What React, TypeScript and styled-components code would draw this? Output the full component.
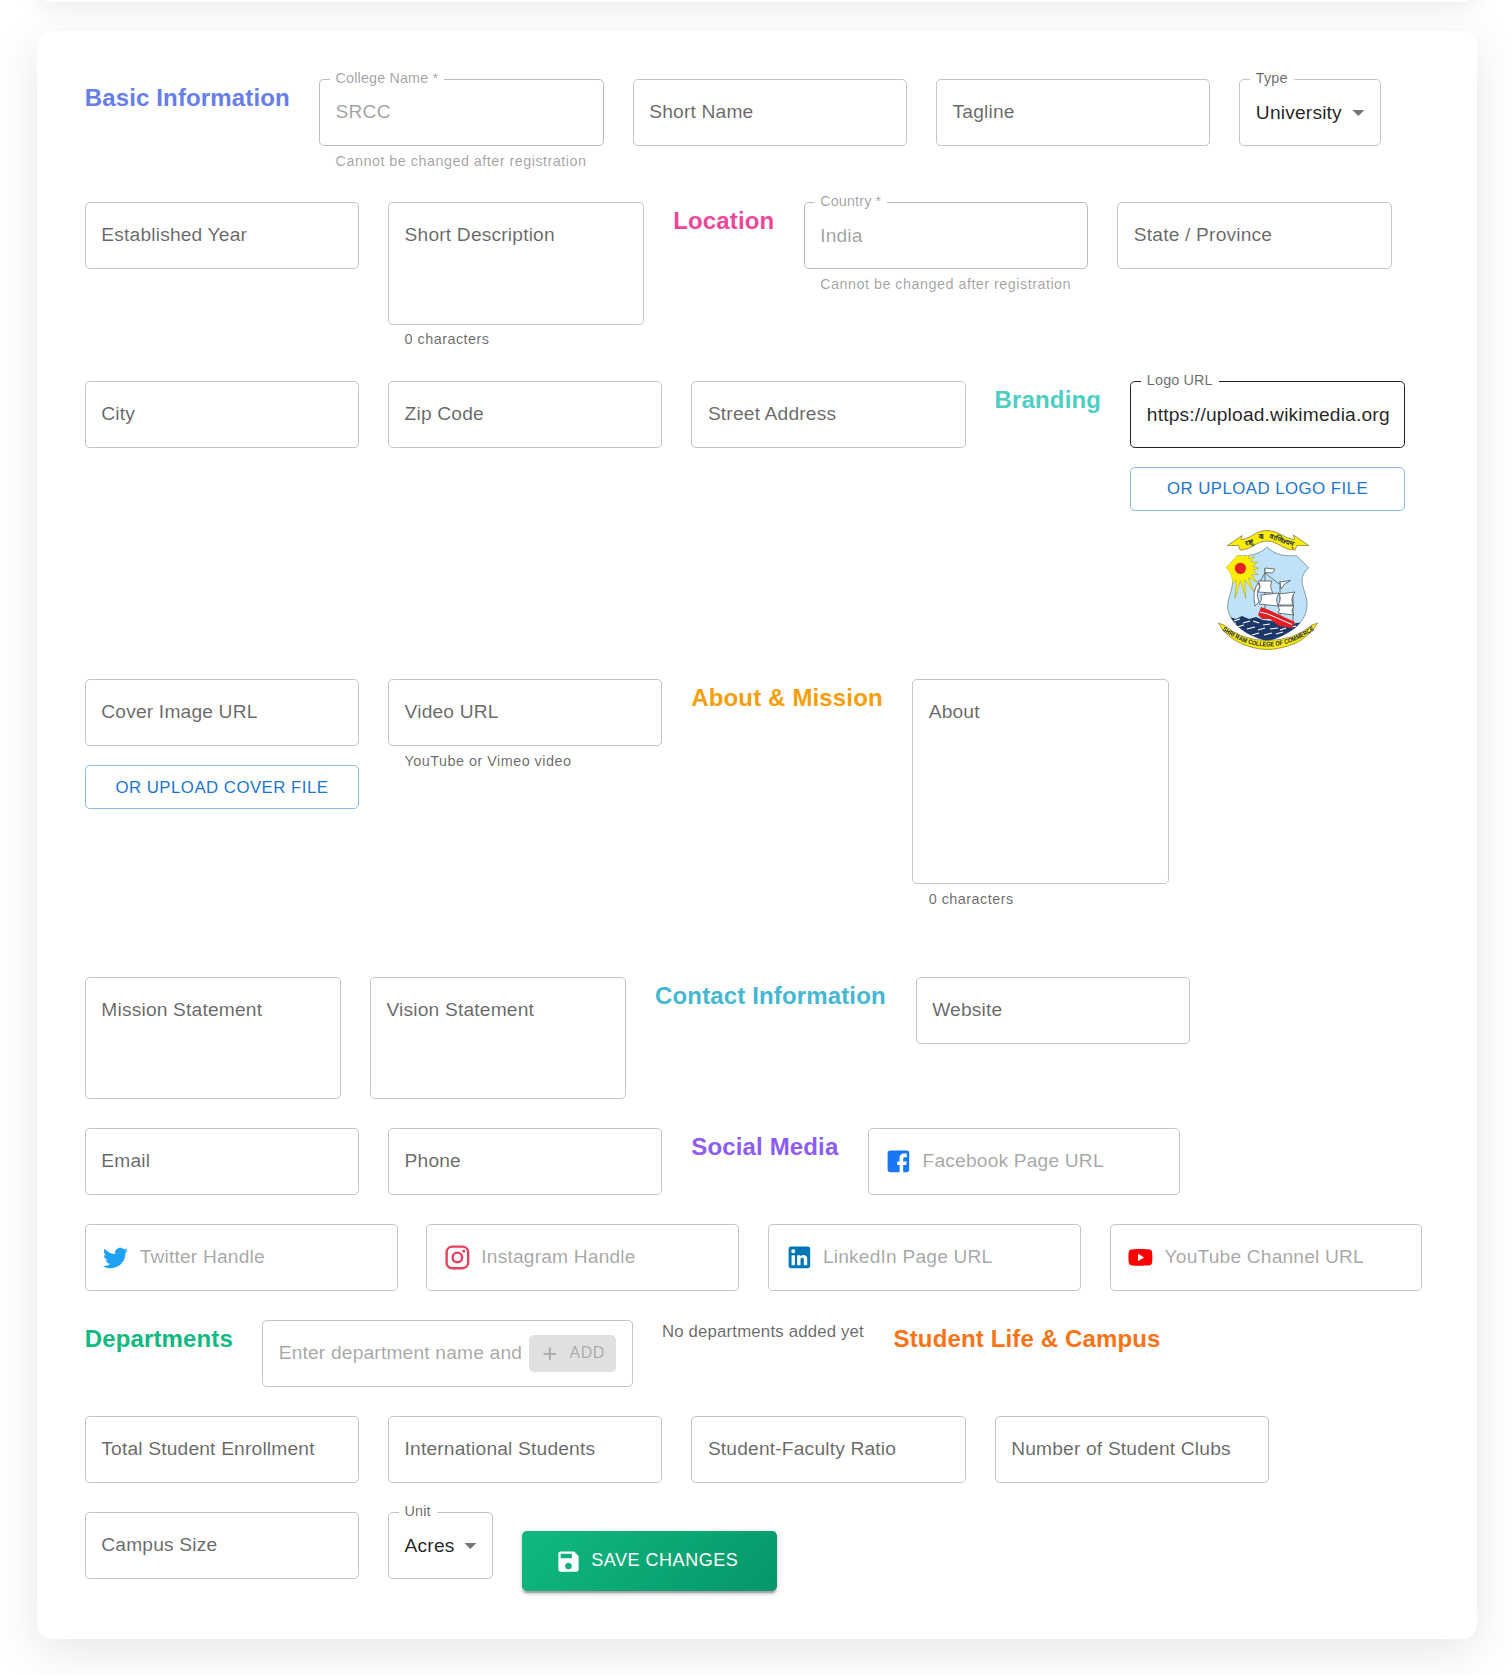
import React from 'react';
import styled, { createGlobalStyle } from 'styled-components';

const GlobalStyle = createGlobalStyle`
  *, *::before, *::after { box-sizing: border-box; }
  body {
    margin: 0;
    background: #fff;
    color: rgba(0, 0, 0, 0.87);
    font-family: "Liberation Sans", Arial, sans-serif;
  }
  input, button { font-family: inherit; }
`;

const Page = styled.main`
  height: 1675px;
  overflow: hidden;
  padding-left: 36.7px;
`;

const PreviousCard = styled.div`
  width: 1440px;
  height: 200px;
  margin-top: -198px;
  background: #fff;
  border-radius: 14.4px;
  box-shadow: 0 4.8px 24px rgba(0, 0, 0, 0.08);
`;

const Card = styled.section`
  width: 1440px;
  margin-top: 28.6px;
  padding: 48px;
  background: #fff;
  border-radius: 14.4px;
  box-shadow: 0 12px 48px rgba(0, 0, 0, 0.1);
  display: flex;
  flex-direction: column;
  gap: 28.8px;
`;

const Row = styled.div<{ $minHeight?: number }>`
  display: flex;
  align-items: flex-start;
  gap: 28.8px;
  min-height: ${(p) => (p.$minHeight ? `${p.$minHeight}px` : '0')};
`;

const Heading = styled.h6<{ $color: string; $width: number }>`
  flex: none;
  width: ${(p) => p.$width}px;
  margin: -0.05px 0 0;
  color: ${(p) => p.$color};
  font-size: 24px;
  font-weight: 600;
  line-height: 38.4px;
  letter-spacing: 0.006em;
  white-space: nowrap;
`;

const Control = styled.div<{ $width: number }>`
  flex: none;
  width: ${(p) => p.$width}px;
  display: flex;
  flex-direction: column;
`;

type Tone = 'normal' | 'disabled' | 'active';
const borderOf: Record<Tone, string> = {
  normal: 'rgba(0, 0, 0, 0.23)',
  disabled: 'rgba(0, 0, 0, 0.26)',
  active: 'rgba(0, 0, 0, 0.87)',
};

const Outline = styled.div<{ $tone: Tone; $height: number }>`
  position: relative;
  display: flex;
  align-items: flex-start;
  height: ${(p) => p.$height}px;
  padding: 18px 15.6px 0;
  border: 1px solid ${(p) => borderOf[p.$tone]};
  border-radius: 4.8px;
`;

const RestingLabel = styled.label`
  color: rgba(0, 0, 0, 0.6);
  font-size: 19.2px;
  line-height: 27.6px;
  letter-spacing: 0.00938em;
  white-space: nowrap;
`;

const FloatingLabel = styled.label<{ $disabled: boolean }>`
  position: absolute;
  top: -10.9px;
  left: 9.6px;
  padding: 0 6px;
  background: #fff;
  color: ${(p) => (p.$disabled ? 'rgba(0, 0, 0, 0.38)' : 'rgba(0, 0, 0, 0.6)')};
  font-size: 14.4px;
  line-height: 18px;
  letter-spacing: 0.00938em;
  white-space: nowrap;
`;

const Value = styled.div<{ $disabled?: boolean; $select?: boolean }>`
  flex: 1;
  min-width: 0;
  margin-top: ${(p) => (p.$select ? 0.95 : 0.8)}px;
  color: ${(p) => (p.$disabled ? 'rgba(0, 0, 0, 0.38)' : 'rgba(0, 0, 0, 0.87)')};
  font-size: 19.2px;
  line-height: 27.6px;
  letter-spacing: 0.00938em;
  white-space: nowrap;
`;

const Placeholder = styled.div`
  flex: 1;
  min-width: 0;
  color: rgba(0, 0, 0, 0.365);
  font-size: 19.2px;
  line-height: 27.6px;
  letter-spacing: 0.00938em;
  white-space: nowrap;
`;

const HelperText = styled.p<{ $disabled?: boolean }>`
  margin: 3.75px 16.6px -0.15px;
  color: ${(p) => (p.$disabled ? 'rgba(0, 0, 0, 0.38)' : 'rgba(0, 0, 0, 0.6)')};
  font-size: 14.4px;
  line-height: 23.9px;
  letter-spacing: 0.03333em;
  white-space: nowrap;
`;

const Arrow = styled.svg`
  flex: none;
  width: 28.8px;
  height: 28.8px;
  margin: 0.3px -8px 0 0;
  fill: rgba(0, 0, 0, 0.54);
`;

const BrandIcon = styled.svg<{ $color: string }>`
  flex: none;
  width: 28.8px;
  height: 28.8px;
  margin: 0 9.6px 0 0;
  fill: ${(p) => p.$color};
`;

const UploadButton = styled.button`
  height: 43.8px;
  margin-top: 19.2px;
  padding: 0;
  background: transparent;
  border: 1px solid rgba(25, 118, 210, 0.5);
  border-radius: 4.8px;
  color: #1976d2;
  font-size: 16.8px;
  font-weight: 500;
  line-height: 29.4px;
  letter-spacing: 0.02857em;
`;

const CrestFrame = styled.div`
  display: flex;
  justify-content: center;
  margin-top: 19.2px;
  padding-left: 1.6px;
`;

const AddButton = styled.button`
  flex: none;
  display: flex;
  align-items: center;
  gap: 9px;
  height: 36.9px;
  margin: -3.8px 0 0 8px;
  padding: 0 11.8px 0 9.6px;
  background: rgba(0, 0, 0, 0.12);
  border: 0;
  border-radius: 4.8px;
  color: rgba(0, 0, 0, 0.26);
  font-size: 16px;
  font-weight: 500;
  letter-spacing: 0.02857em;
`;

const AddIcon = styled.svg`
  width: 21.6px;
  height: 21.6px;
  fill: currentColor;
`;

const EmptyNote = styled.p`
  flex: none;
  width: 202.9px;
  margin: 0;
  color: rgba(0, 0, 0, 0.6);
  font-size: 16.8px;
  line-height: 24px;
  letter-spacing: 0.01071em;
  white-space: nowrap;
`;

const SaveButton = styled.button`
  display: flex;
  align-items: center;
  justify-content: center;
  gap: 9.6px;
  width: 255px;
  height: 60px;
  margin-top: 19.2px;
  padding: 0 5.6px 0 0;
  border: 0;
  border-radius: 4.8px;
  background: linear-gradient(135deg, #10b981 0%, #059669 100%);
  box-shadow: 0 3.6px 1.2px -2.4px rgba(0, 0, 0, 0.2), 0 2.4px 2.4px rgba(0, 0, 0, 0.14),
    0 1.2px 6px rgba(0, 0, 0, 0.12);
  color: #fff;
  font-size: 18px;
  font-weight: 500;
  letter-spacing: 0.02857em;
`;

const SaveIcon = styled.svg`
  width: 27px;
  height: 27px;
  fill: currentColor;
  margin-top: 1px;
`;

interface FieldProps {
  label: string;
  value?: string;
  width?: number;
  height?: number;
  helper?: string;
  tone?: Tone;
  select?: boolean;
  children?: React.ReactNode;
}

function Field({ label, value, width = 274.5, height = 67.2, helper, tone = 'normal', select, children }: FieldProps) {
  const disabled = tone === 'disabled';
  return (
    <Control $width={width}>
      <Outline $tone={tone} $height={height}>
        {value ? (
          <>
            <FloatingLabel $disabled={disabled}>{label}</FloatingLabel>
            <Value $disabled={disabled} $select={select}>{value}</Value>
          </>
        ) : (
          <RestingLabel>{label}</RestingLabel>
        )}
        {select && (
          <Arrow viewBox="0 0 24 24">
            <path d="M7 10l5 5 5-5z" />
          </Arrow>
        )}
      </Outline>
      {helper && <HelperText $disabled={disabled}>{helper}</HelperText>}
      {children}
    </Control>
  );
}

const brandPaths = {
  facebook:
    'M5 3h14a2 2 0 0 1 2 2v14a2 2 0 0 1-2 2h-3v-6h2.4l.6-3h-3v-2c0-1 .5-1.5 1.5-1.5H19V5.5h-2.5c-2.2 0-3.5 1.4-3.500 3.500v3h-2v3h2v6H5a2 2 0 0 1-2-2V5c0-1.110.9-2 2-2z',
  twitter:
    'M22.46 6c-.77.35-1.6.58-2.46.69.88-.53 1.56-1.37 1.88-2.38-.83.5-1.75.85-2.72 1.05C18.37 4.5 17.26 4 16 4c-2.35 0-4.27 1.92-4.27 4.29 0 .34.04.67.11.98C8.28 9.09 5.11 7.38 3 4.79c-.37.63-.58 1.37-.58 2.15 0 1.490.75 2.810 1.910 3.560-.71 0-1.370-.2-1.950-.5v.03c0 2.080 1.480 3.820 3.440 4.210a4.220 4.220 0 0 1-1.930.07 4.280 4.280 0 0 0 4 2.980 8.521 8.521 0 0 1-5.330 1.840c-.34 0-.68-.02-1.020-.06C3.440 20.290 5.700 21 8.120 21 16 21 20.330 14.460 20.330 8.790c0-.19 0-.37-.01-.56.84-.6 1.560-1.360 2.140-2.230z',
  instagram:
    'M7.8 2h8.4C19.4 2 22 4.6 22 7.8v8.4a5.800 5.800 0 0 1-5.800 5.800H7.800C4.600 22 2 19.400 2 16.200V7.800A5.800 5.800 0 0 1 7.800 2m-.2 2A3.600 3.600 0 0 0 4 7.600v8.800C4 18.390 5.610 20 7.600 20h8.800a3.600 3.600 0 0 0 3.600-3.600V7.600C20 5.610 18.390 4 16.400 4H7.600m9.650 1.500a1.250 1.250 0 0 1 1.250 1.250A1.250 1.250 0 0 1 17.250 8 1.250 1.250 0 0 1 16 6.750a1.250 1.250 0 0 1 1.250-1.250M12 7a5 5 0 0 1 5 5 5 5 0 0 1-5 5 5 5 0 0 1-5-5 5 5 0 0 1 5-5m0 2a3 3 0 0 0-3 3 3 3 0 0 0 3 3 3 3 0 0 0 3-3 3 3 0 0 0-3-3z',
  linkedin:
    'M19 3a2 2 0 0 1 2 2v14a2 2 0 0 1-2 2H5a2 2 0 0 1-2-2V5a2 2 0 0 1 2-2h14m-.5 15.500v-5.300a3.260 3.260 0 0 0-3.260-3.260c-.85 0-1.840.52-2.320 1.300v-1.110h-2.790v8.370h2.790v-4.930c0-.77.62-1.400 1.390-1.400a1.400 1.400 0 0 1 1.400 1.400v4.930h2.790M6.880 8.560a1.680 1.680 0 0 0 1.680-1.680c0-.93-.75-1.690-1.680-1.690a1.690 1.690 0 0 0-1.690 1.690c0 .93.76 1.680 1.690 1.680m1.390 9.940v-8.370H5.500v8.370h2.770z',
  youtube:
    'M10 15l5.190-3L10 9v6m11.560-7.830c.13.47.22 1.100.28 1.900.07.8.1 1.490.1 2.090L22 12c0 2.190-.16 3.800-.44 4.830-.25.9-.83 1.480-1.730 1.730-.47.13-1.330.22-2.650.28-1.300.07-2.490.1-3.590.1L12 19c-4.190 0-6.800-.16-7.830-.44-.9-.25-1.480-.83-1.730-1.730-.13-.47-.22-1.100-.28-1.900-.07-.8-.1-1.490-.1-2.090L2 12c0-2.190.16-3.800.44-4.830.25-.9.83-1.480 1.730-1.730.47-.13 1.330-.22 2.650-.28 1.300-.07 2.490-.1 3.590-.1L12 5c4.190 0 6.800.16 7.830.44.9.25 1.480.83 1.730 1.730z',
};

function SocialField({ brand, color, text }: { brand: keyof typeof brandPaths; color: string; text: string }) {
  return (
    <Control $width={312.85}>
      <Outline $tone="normal" $height={67.2}>
        <BrandIcon $color={color} viewBox="0 0 24 24">
          <path d={brandPaths[brand]} />
        </BrandIcon>
        <Placeholder>{text}</Placeholder>
      </Outline>
    </Control>
  );
}

// Sunburst outline: rays grow longer towards the bottom of the shield.
function sunRays() {
  const points: string[] = [];
  const count = 36;
  for (let i = 0; i < count; i++) {
    const a = (i * 2 * Math.PI) / count;
    const tip = i % 2 ? 12 : 18.5 + Math.pow(Math.max(0, Math.sin(a)), 3) * 13;
    points.push(`${(22.4 + Math.cos(a) * tip).toFixed(1)},${(38.3 + Math.sin(a) * tip).toFixed(1)}`);
  }
  return points.join(' ');
}

const SHIELD =
  'M49.3 17C54 22 62 27 78.4 25.7L90.700 37.700C84 44 83.500 49 84.400 54C86 62 89.500 68 89 76C88 95 68 106 49.300 111C30 106 11 95 9.500 76C10 68 14 61 14.600 53C15 48 13 42 8.400 37.700L19 25.700C35 27 44 22 49.300 17Z';

function CollegeCrest() {
  return (
    <svg width="100" height="120" viewBox="0 0 100 120" fontFamily="Liberation Sans, Arial, sans-serif">
      <defs>
        <clipPath id="shield">
          <path d={SHIELD} />
        </clipPath>
        <path id="name" d="M4 100Q26 116.500 49 116.500Q73 116.500 96 100" />
      </defs>
      <path d={SHIELD} fill="#bfe2f8" stroke="#4d6475" strokeWidth=".6" />
      <g clipPath="url(#shield)">
        <path d="M6 24H32L28 48L16 52L6 44Z" fill="#fdec07" />
        <polygon points={sunRays()} fill="#fdec07" stroke="#8f8a24" strokeWidth=".4" />
        <circle cx="22.4" cy="38.3" r="12.500" fill="#fdec07" />
        <path d="M5 89L12 87L18 89L24 86L31 89L38 87L45 90L54 91L63 94L70 96L78 93L95 92V115H5Z" fill="#1c3768" />
        <path
          d="M16 91l6-2M25 93l7-2M35 91l6 2M45 95l7-1M19 97l7-2M29 99l8-2M40 100l7-2M52 99l8-1M62 100l6-2M34 105l7-2M46 105l8-2M58 104l7-2M73 97l5-1M14 94l4-1"
          stroke="#fff"
          strokeWidth="1.200"
        />
      </g>
      <circle cx="22.4" cy="38.3" r="5.600" fill="#e31f26" />
      <g stroke="#3c4348" strokeWidth=".7" fill="#fff">
        <path d="M47 38V82M62 51V88M75 62V94M47 43L37 60M47 43L61 54" fill="none" />
        <path d="M47 38L57 39L54.500 43L47 42.500Z" />
        <path d="M40 51H54Q51 57 55 63L40 62Q44 57 40 51Z" />
        <path d="M62 52L72.500 50.500Q65 54 63 59Z" />
        <path d="M40 53Q34 61 37 76L41 72Q37 62 42 57Z" />
        <path d="M43 65L61 63Q57 69 60 76L41 74Q45 70 43 65Z" />
        <path d="M61 64L77 62Q72 68 75 75L60 75Q64 69 61 64Z" />
        <path d="M60 76H76Q72 81 76 85L60 83Q63 80 60 76Z" />
      </g>
      <path d="M43 77L51 80L77 92L74 98L61 96L52 89L44 89L40 85Z" fill="#e31f26" />
      <path d="M42 82L50 84L74 94.500" fill="none" stroke="#fff" strokeWidth="1" />
      <path
        d="M9.400 15.500L24 5.500L23 9.500C34 8.500 37 .500 49 .500C61 .500 66 8.500 76.500 9.500L75.500 5L90.700 15.500L79 15.500L77 20C64 20 60 11 49 11C38 11 34 20 22 20L20.500 15.500Z"
        fill="#fdec07"
        stroke="#5c5a34"
        strokeWidth=".6"
      />
      <path
        d="M.500 93L6 95Q24 110.500 49 110.500Q76 110.500 94 95L99.500 93Q92 106 78 113Q62 119.500 49 119.500Q34 119.500 18 111Q6 104 .500 93Z"
        fill="#fdec07"
        stroke="#5c5a34"
        strokeWidth=".6"
      />
      <g fontSize="7" fontWeight="700" fill="#243444" textAnchor="middle">
        <text transform="translate(32 15) rotate(-18)">राष्ट्रं</text>
        <text transform="translate(43.500 9) rotate(-6)">वा</text>
        <text transform="translate(63 12.500) rotate(19)">वाणिज्यम्</text>
      </g>
      <text fontSize="6.600" fontWeight="700" fill="#1a2b4a">
        <textPath href="#name" textLength="100" lengthAdjust="spacingAndGlyphs">
          SHRI RAM COLLEGE OF COMMERCE
        </textPath>
      </text>
    </svg>
  );
}

export default function App() {
  return (
    <>
      <GlobalStyle />
      <Page>
        <PreviousCard />
        <Card>
          <Row>
            <Heading $color="#667eea" $width={205.5}>Basic Information</Heading>
            <Field label="College Name *" value="SRCC" width={284.9} tone="disabled" helper="Cannot be changed after registration" />
            <Field label="Short Name" />
            <Field label="Tagline" />
            <Field label="Type" value="University" width={142} select />
          </Row>
          <Row>
            <Field label="Established Year" />
            <Field label="Short Description" width={256.4} height={122.5} helper="0 characters" />
            <Heading $color="#ec4899" $width={101.6}>Location</Heading>
            <Field label="Country *" value="India" width={284.9} tone="disabled" helper="Cannot be changed after registration" />
            <Field label="State / Province" />
          </Row>
          <Row>
            <Field label="City" />
            <Field label="Zip Code" />
            <Field label="Street Address" />
            <Heading $color="#4ecdc4" $width={106.9}>Branding</Heading>
            <Field label="Logo URL" value="https://upload.wikimedia.org" tone="active">
              <UploadButton>OR UPLOAD LOGO FILE</UploadButton>
              <CrestFrame>
                <CollegeCrest />
              </CrestFrame>
            </Field>
          </Row>
          <Row $minHeight={268.7}>
            <Field label="Cover Image URL">
              <UploadButton>OR UPLOAD COVER FILE</UploadButton>
            </Field>
            <Field label="Video URL" helper="YouTube or Vimeo video" />
            <Heading $color="#f59e0b" $width={192}>About &amp; Mission</Heading>
            <Field label="About" width={256.6} height={205.2} helper="0 characters" />
          </Row>
          <Row>
            <Field label="Mission Statement" width={256.4} height={122.4} />
            <Field label="Vision Statement" width={256.4} height={122.4} />
            <Heading $color="#45b7d1" $width={231.7}>Contact Information</Heading>
            <Field label="Website" width={274.2} />
          </Row>
          <Row>
            <Field label="Email" />
            <Field label="Phone" />
            <Heading $color="#8b5cf6" $width={147.5}>Social Media</Heading>
            <SocialField brand="facebook" color="#1877f2" text="Facebook Page URL" />
          </Row>
          <Row>
            <SocialField brand="twitter" color="#1da1f2" text="Twitter Handle" />
            <SocialField brand="instagram" color="#e4405f" text="Instagram Handle" />
            <SocialField brand="linkedin" color="#0077b5" text="LinkedIn Page URL" />
            <SocialField brand="youtube" color="#ff0000" text="YouTube Channel URL" />
          </Row>
          <Row>
            <Heading $color="#10b981" $width={148.6}>Departments</Heading>
            <Control $width={371}>
              <Outline $tone="normal" $height={67.2}>
                <Placeholder>Enter department name and</Placeholder>
                <AddButton>
                  <AddIcon viewBox="0 0 24 24">
                    <path d="M19 13h-6v6h-2v-6H5v-2h6V5h2v6h6v2z" />
                  </AddIcon>
                  ADD
                </AddButton>
              </Outline>
            </Control>
            <EmptyNote>No departments added yet</EmptyNote>
            <Heading $color="#f97316" $width={267}>Student Life &amp; Campus</Heading>
          </Row>
          <Row>
            <Field label="Total Student Enrollment" />
            <Field label="International Students" />
            <Field label="Student-Faculty Ratio" />
            <Field label="Number of Student Clubs" />
          </Row>
          <Row>
            <Field label="Campus Size" />
            <Field label="Unit" value="Acres" width={105} select />
            <SaveButton>
              <SaveIcon viewBox="0 0 24 24">
                <path d="M17 3H5c-1.110 0-2 .9-2 2v14c0 1.100.89 2 2 2h14c1.100 0 2-.9 2-2V7l-4-4zm-5 16c-1.660 0-3-1.340-3-3s1.340-3 3-3 3 1.340 3 3-1.340 3-3 3zm3-10H5V5h10v4z" />
              </SaveIcon>
              SAVE CHANGES
            </SaveButton>
          </Row>
        </Card>
      </Page>
    </>
  );
}
